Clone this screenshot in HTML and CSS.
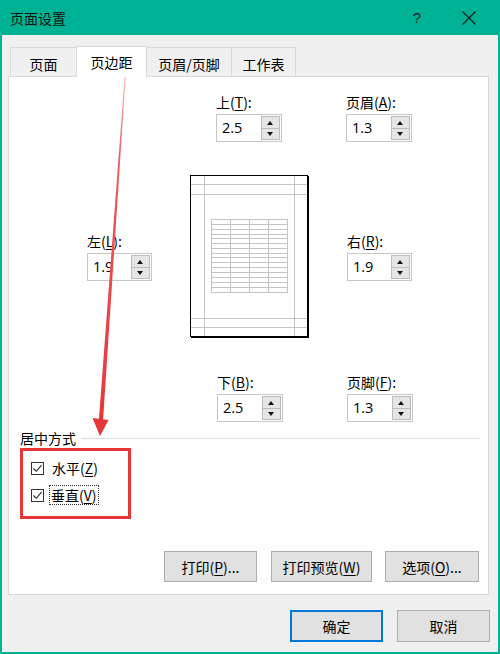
FILE: index.html
```html
<!DOCTYPE html>
<html lang="zh">
<head>
<meta charset="utf-8">
<title>页面设置</title>
<link rel="stylesheet" href="styles.css">
</head>
<body>
<div class="dialog">
  <div class="titlebar">
    <span class="title">页面设置</span>
    <span class="help">?</span>
    <svg class="close" width="16" height="16" viewBox="0 0 16 16"><path d="M1.5 1.5 L14.5 14.5 M14.5 1.5 L1.5 14.5" stroke="#1b1b1b" stroke-width="1.2" fill="none"/></svg>
  </div>
  <div class="tabs">
    <div class="tab t1">页面</div>
    <div class="tab t2 active">页边距</div>
    <div class="tab t3">页眉/页脚</div>
    <div class="tab t4">工作表</div>
  </div>
  <div class="panel">
    <div class="row row-top">
      <div class="field">
        <div class="label">上(<u>T</u>):</div>
        <div class="spin"><span class="val">2.5</span><span class="btns"><span class="b up"></span><span class="b down"></span></span></div>
      </div>
      <div class="field">
        <div class="label">页眉(<u>A</u>):</div>
        <div class="spin"><span class="val">1.3</span><span class="btns"><span class="b up"></span><span class="b down"></span></span></div>
      </div>
    </div>
    <div class="row row-mid">
      <div class="field">
        <div class="label">左(<u>L</u>):</div>
        <div class="spin"><span class="val">1.9</span><span class="btns"><span class="b up"></span><span class="b down"></span></span></div>
      </div>
      <div class="preview">
        <svg width="116" height="160" viewBox="0 0 116 160">
          <g stroke="#c4c4c4" stroke-width="1" fill="none" shape-rendering="crispEdges">
            <line x1="13.5" y1="0" x2="13.5" y2="160"/>
            <line x1="103.5" y1="0" x2="103.5" y2="160"/>
            <line x1="0" y1="8.5" x2="116" y2="8.5"/>
            <line x1="0" y1="18.5" x2="116" y2="18.5"/>
            <line x1="0" y1="142.5" x2="116" y2="142.5"/>
            <line x1="0" y1="151.5" x2="116" y2="151.5"/>
            <rect x="20.5" y="43.5" width="76" height="73"/>
            <line x1="39.5" y1="43" x2="39.5" y2="117"/>
            <line x1="58.5" y1="43" x2="58.5" y2="117"/>
            <line x1="77.5" y1="43" x2="77.5" y2="117"/>
            <line x1="20" y1="48.5" x2="97" y2="48.5"/>
            <line x1="20" y1="53.5" x2="97" y2="53.5"/>
            <line x1="20" y1="58.5" x2="97" y2="58.5"/>
            <line x1="20" y1="62.5" x2="97" y2="62.5"/>
            <line x1="20" y1="67.5" x2="97" y2="67.5"/>
            <line x1="20" y1="72.5" x2="97" y2="72.5"/>
            <line x1="20" y1="77.5" x2="97" y2="77.5"/>
            <line x1="20" y1="81.5" x2="97" y2="81.5"/>
            <line x1="20" y1="86.5" x2="97" y2="86.5"/>
            <line x1="20" y1="91.5" x2="97" y2="91.5"/>
            <line x1="20" y1="96.5" x2="97" y2="96.5"/>
            <line x1="20" y1="101.5" x2="97" y2="101.5"/>
            <line x1="20" y1="106.5" x2="97" y2="106.5"/>
            <line x1="20" y1="111.5" x2="97" y2="111.5"/>
          </g>
        </svg>
      </div>
      <div class="field">
        <div class="label">右(<u>R</u>):</div>
        <div class="spin"><span class="val">1.9</span><span class="btns"><span class="b up"></span><span class="b down"></span></span></div>
      </div>
    </div>
    <div class="row row-bot">
      <div class="field">
        <div class="label">下(<u>B</u>):</div>
        <div class="spin"><span class="val">2.5</span><span class="btns"><span class="b up"></span><span class="b down"></span></span></div>
      </div>
      <div class="field">
        <div class="label">页脚(<u>F</u>):</div>
        <div class="spin"><span class="val">1.3</span><span class="btns"><span class="b up"></span><span class="b down"></span></span></div>
      </div>
    </div>
    <div class="group-head"><span>居中方式</span><span class="sep"></span></div>
    <div class="checks">
      <div class="check"><span class="box"><svg width="11" height="11" viewBox="0 0 11 11"><path d="M1.5 5.5 L4.3 8.3 L9.5 2.2" stroke="#222" stroke-width="1.1" fill="none"/></svg></span><span class="ctext">水平(<u>Z</u>)</span></div>
      <div class="check"><span class="box"><svg width="11" height="11" viewBox="0 0 11 11"><path d="M1.5 5.5 L4.3 8.3 L9.5 2.2" stroke="#222" stroke-width="1.1" fill="none"/></svg></span><span class="ctext focus">垂直(<u>V</u>)</span></div>
    </div>
    <div class="actions">
      <div class="btn w93">打印(<u>P</u>)...</div>
      <div class="btn w101">打印预览(<u>W</u>)</div>
      <div class="btn w94">选项(<u>O</u>)...</div>
    </div>
  </div>
  <div class="footer">
    <div class="btn w93 primary">确定</div>
    <div class="btn w93">取消</div>
  </div>
</div>
<svg class="annot" width="500" height="654" viewBox="0 0 500 654">
  <defs>
    <linearGradient id="fade" x1="0" y1="77" x2="0" y2="420" gradientUnits="userSpaceOnUse">
      <stop offset="0" stop-color="#f6b5b5"/>
      <stop offset="0.25" stop-color="#ec5a5e"/>
      <stop offset="1" stop-color="#e8353a"/>
    </linearGradient>
  </defs>
  <polygon points="124.6,77 125.6,77 103,421 98.8,421" fill="url(#fade)"/>
  <polygon points="92.5,418 108.5,420 100,436" fill="#e8353a"/>
</svg>
</body>
</html>
```

FILE: styles.css
```css
* { box-sizing: border-box; }
html, body { margin: 0; padding: 0; }
body {
  width: 500px;
  height: 654px;
  overflow: hidden;
  position: relative;
  font-family: "Noto Sans CJK SC", "Noto Sans", sans-serif;
  font-size: 14px;
  color: #000;
}
u { text-decoration-thickness: 1px; text-underline-offset: 2px; }

.dialog {
  width: 500px;
  height: 654px;
  background: #f0f0f0;
  border-left: 2px solid #00b294;
  border-right: 2px solid #00b294;
  border-bottom: 2px solid #00b294;
}
.titlebar {
  height: 35px;
  margin: 0 -2px;
  background: #00b294;
  display: flex;
  align-items: center;
  padding-left: 10px;
}
.title { font-size: 14px; line-height: 20px; color: #111; }
.help { margin-left: auto; margin-right: 40px; font-family: "Liberation Sans", sans-serif; font-size: 15px; color: #1b1b1b; }
.close { margin-right: 23px; }

.tabs {
  display: flex;
  margin-top: 11px;
  margin-left: 8px;
  height: 30px;
  align-items: flex-end;
  position: relative;
  z-index: 2;
}
.tab {
  height: 29px;
  border: 1px solid #d9d9d9;
  border-bottom: none;
  border-right: none;
  background: #f0f0f0;
  display: flex;
  align-items: center;
  justify-content: center;
  line-height: 20px;
  padding-top: 3px;
}
.t4 { border-right: 1px solid #d9d9d9; }
.t1 { width: 66px; }
.t2 { width: 71px; }
.t3 { width: 84px; }
.t4 { width: 65px; }
.tab.active {
  height: 31px;
  background: #fff;
  margin-bottom: -1px;
  border-right: 1px solid #d9d9d9;
  padding-top: 0;
}
.tab.active + .tab { border-left: none; }

.panel {
  margin-left: 6px;
  width: 481px;
  height: 519px;
  background: #fff;
  border: 1px solid #d9d9d9;
  padding-top: 15px;
}
.row { display: flex; }
.row-top { margin-left: 207px; gap: 64px; }
.row-mid { margin-top: 33px; margin-left: 78px; align-items: center; }
.row-bot { margin-top: 35px; margin-left: 208px; gap: 64px; }

.field { width: 66px; }
.label { height: 20px; line-height: 20px; margin-bottom: 2px; white-space: nowrap; }
.spin {
  height: 28px;
  border: 1px solid #c6c6c6;
  display: flex;
  background: #fff;
}
.val {
  flex: 1;
  padding-left: 5px;
  font-family: "Open Sans", sans-serif;
  font-size: 14.5px;
  line-height: 26px;
}
.btns {
  width: 19px;
  display: flex;
  flex-direction: column;
  margin: 1px 1px 1px 0;
}
.b {
  flex: 1;
  background: #e5e5e5;
  border: 1px solid #bcbcbc;
  position: relative;
}
.b.down { border-top: none; }
.b::after {
  content: "";
  position: absolute;
  left: 5px;
  width: 0;
  height: 0;
  border-left: 3.5px solid transparent;
  border-right: 3.5px solid transparent;
}
.b.up::after { top: 4px; border-bottom: 4px solid #111; }
.b.down::after { top: 3px; border-top: 4px solid #111; }

.row-mid .field { width: 65px; }
.preview {
  width: 118px;
  height: 162px;
  margin-left: 38px;
  margin-right: 39px;
  border: 1px solid #000;
  box-shadow: 1px 1px 0 #000;
}
.preview svg { display: block; }

.group-head {
  margin-top: 6px;
  height: 20px;
  display: flex;
  align-items: center;
  padding-left: 11px;
  padding-right: 8px;
  line-height: 20px;
}
.sep { flex: 1; height: 1px; background: #dcdcdc; margin-left: 5px; margin-top: 0; }

.checks {
  margin-left: 11px;
  width: 111px;
  height: 71px;
  border: 3px solid #e8353a;
  padding: 7px 0 0 8px;
  display: flex;
  flex-direction: column;
  gap: 7px;
}
.check { display: flex; align-items: center; height: 20px; }
.box {
  width: 13px;
  height: 13px;
  border: 1px solid #333;
  display: flex;
  align-items: center;
  justify-content: center;
  background: #fff;
}
.box svg { display: block; }
.ctext { margin-left: 6px; line-height: 18px; padding: 0 1px; border: 1px solid transparent; }
.ctext.focus { border: 1px dotted #333; margin-left: 5px; }

.actions {
  margin-top: 32px;
  display: flex;
  justify-content: flex-end;
  padding-right: 9px;
  gap: 13px;
}
.actions .w93 { margin-right: 1px; }
.btn {
  height: 31px;
  background: #e1e1e1;
  border: 1px solid #adadad;
  display: flex;
  align-items: center;
  justify-content: center;
  line-height: 20px;
  white-space: nowrap;
}
.w93 { width: 93px; }
.w94 { width: 94px; }
.w101 { width: 101px; }
.footer {
  margin-top: 15px;
  display: flex;
  justify-content: flex-end;
  gap: 14px;
  padding-right: 8px;
}
.footer .btn { height: 32px; }
.btn.primary { border: 1px solid #0078d7; box-shadow: inset 0 0 0 1px #0078d7; }

.annot { position: absolute; left: 0; top: 0; pointer-events: none; }
```
